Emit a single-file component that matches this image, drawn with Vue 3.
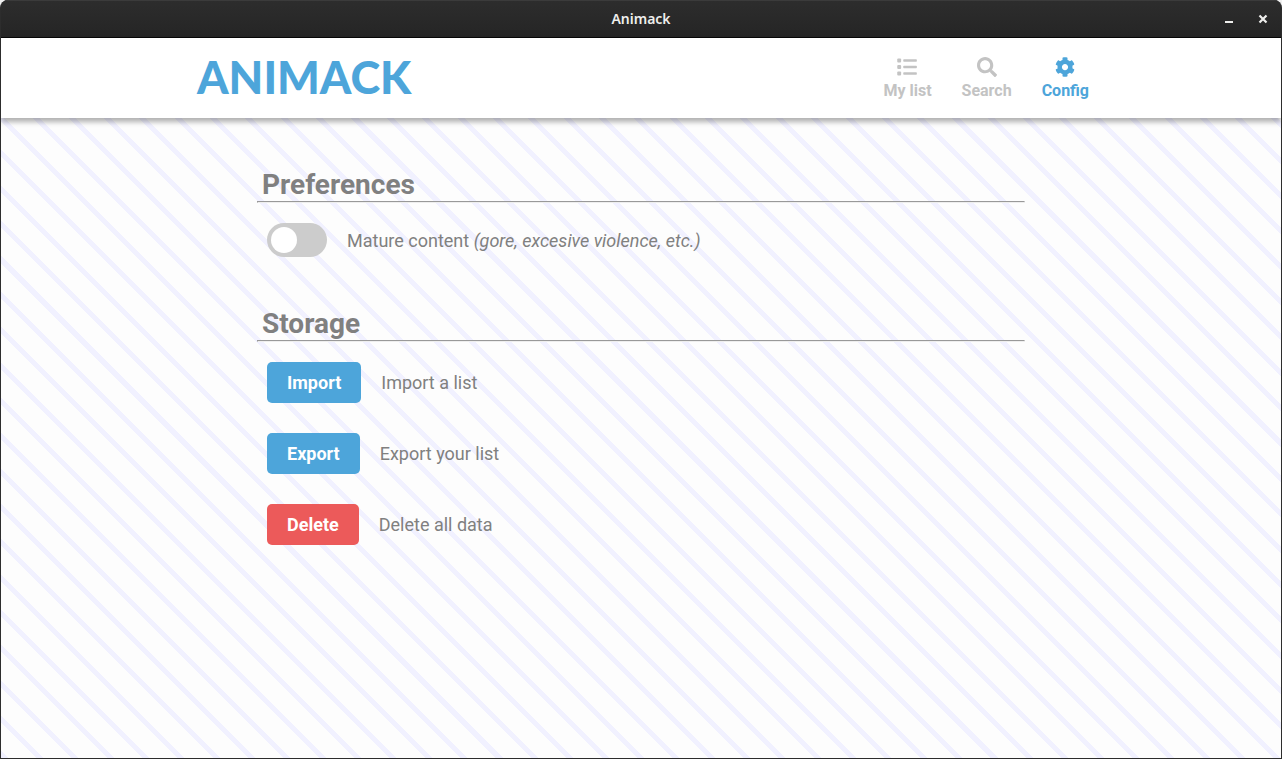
<script setup>
import { ref } from 'vue'

const current = ref('config')
const mature = ref(false)

const tabs = [
  { id: 'list', label: 'My list' },
  { id: 'search', label: 'Search' },
  { id: 'config', label: 'Config' },
]

const actions = [
  { id: 'import', label: 'Import', text: 'Import a list' },
  { id: 'export', label: 'Export', text: 'Export your list' },
  { id: 'delete', label: 'Delete', text: 'Delete all data', danger: true },
]
</script>

<template>
  <div class="window">
    <div class="titlebar">
      <span class="title">Animack</span>
      <div class="controls">
        <button type="button" aria-label="Minimize">
          <svg width="10" height="10" viewBox="0 0 10 10"><path d="M1 8h8" stroke="currentColor" stroke-width="2" /></svg>
        </button>
        <button type="button" aria-label="Close">
          <svg width="10" height="10" viewBox="0 0 10 10"><path d="M1.5 1.5l7 7M8.5 1.5l-7 7" stroke="currentColor" stroke-width="2.2" /></svg>
        </button>
      </div>
    </div>

    <header class="header">
      <div class="bar">
        <a class="logo" href="#">ANIMACK</a>
        <nav class="nav">
          <a
            v-for="tab in tabs"
            :key="tab.id"
            :href="'#' + tab.id"
            :class="{ active: current === tab.id }"
            @click="current = tab.id"
          >
            <svg v-if="tab.id === 'list'" class="icon" viewBox="0 0 512 512" fill="currentColor">
              <rect x="6" y="40" width="100" height="100" rx="26" />
              <rect x="6" y="206" width="100" height="100" rx="26" />
              <rect x="6" y="372" width="100" height="100" rx="26" />
              <rect x="160" y="58" width="348" height="64" rx="18" />
              <rect x="160" y="224" width="348" height="64" rx="18" />
              <rect x="160" y="390" width="348" height="64" rx="18" />
            </svg>
            <svg v-else-if="tab.id === 'search'" class="icon" viewBox="0 0 512 512" fill="currentColor">
              <path d="M505 442.7L405.3 343c-4.5-4.5-10.6-7-17-7H372c27.6-35.3 44-79.7 44-128C416 93.1 322.9 0 208 0S0 93.1 0 208s93.1 208 208 208c48.3 0 92.7-16.4 128-44v16.3c0 6.4 2.5 12.5 7 17l99.7 99.7c9.4 9.4 24.6 9.4 33.9 0l28.3-28.3c9.4-9.4 9.4-24.6.1-34zM208 336c-70.7 0-128-57.2-128-128 0-70.7 57.2-128 128-128 70.7 0 128 57.2 128 128 0 70.7-57.2 128-128 128z" />
            </svg>
            <svg v-else class="icon" viewBox="0 0 512 512" fill="currentColor">
              <path d="M487.4 315.7l-42.6-24.6c4.3-23.2 4.3-47 0-70.2l42.6-24.6c4.9-2.8 7.1-8.6 5.5-14-11.1-35.6-30-67.8-54.7-94.6-3.8-4.1-10-5.1-14.8-2.3L380.8 110c-17.9-15.4-38.5-27.3-60.8-35.1V25.8c0-5.6-3.9-10.5-9.4-11.7-36.7-8.2-74.3-7.8-109.2 0-5.5 1.2-9.4 6.1-9.4 11.7V75c-22.2 7.9-42.8 19.8-60.8 35.1L88.7 85.5c-4.9-2.8-11-1.9-14.8 2.3-24.7 26.7-43.6 58.9-54.7 94.6-1.7 5.4.6 11.2 5.5 14L67.3 221c-4.3 23.2-4.3 47 0 70.2l-42.6 24.6c-4.9 2.8-7.1 8.6-5.5 14 11.1 35.6 30 67.8 54.7 94.6 3.8 4.1 10 5.1 14.8 2.3l42.6-24.6c17.9 15.4 38.5 27.3 60.8 35.1v49.2c0 5.6 3.9 10.5 9.4 11.7 36.7 8.2 74.3 7.8 109.2 0 5.5-1.2 9.4-6.1 9.4-11.7v-49.2c22.2-7.9 42.8-19.8 60.8-35.1l42.6 24.6c4.9 2.8 11 1.9 14.8-2.3 24.7-26.7 43.6-58.9 54.7-94.6 1.5-5.5-.7-11.3-5.6-14.1zM256 336c-44.1 0-80-35.9-80-80s35.9-80 80-80 80 35.9 80 80-35.9 80-80 80z" />
            </svg>
            <span>{{ tab.label }}</span>
          </a>
        </nav>
      </div>
    </header>

    <main class="content">
      <section>
        <h2>Preferences</h2>
        <hr />
        <div class="rows">
          <label class="row">
            <input v-model="mature" class="switch" type="checkbox" />
            <span>Mature content <em>(gore, excesive violence, etc.)</em></span>
          </label>
        </div>
      </section>

      <section>
        <h2>Storage</h2>
        <hr />
        <div class="rows">
          <div v-for="action in actions" :key="action.id" class="row">
            <button
              type="button"
              class="btn"
              :class="{ danger: action.danger }"
              :aria-describedby="action.id + '-text'"
            >{{ action.label }}</button>
            <span :id="action.id + '-text'">{{ action.text }}</span>
          </div>
        </div>
      </section>
    </main>
  </div>
</template>

<style>
body {
  background: #f0f0f0;
}
</style>

<style scoped>
.window {
  box-sizing: border-box;
  min-height: 100vh;
  display: flex;
  flex-direction: column;
  border: 1px solid #2d2d2d;
  border-top: 0;
  border-radius: 8px 8px 0 0;
  overflow: hidden;
  background: #2d2d2d;
  font-family: Roboto, "Liberation Sans", sans-serif;
}

.titlebar {
  box-sizing: border-box;
  height: 38px;
  flex: none;
  display: grid;
  grid-template-columns: 1fr auto 1fr;
  align-items: center;
  padding: 1px 13px 0;
  background: linear-gradient(#2d2d2d, #252525);
  border-bottom: 1px solid #070707;
  box-shadow: inset 0 1px #3b3b3b;
  color: #eeeeec;
}

.title {
  grid-column: 2;
  font: 600 14px/20px "Noto Sans", sans-serif;
}

.controls {
  display: flex;
  justify-content: flex-end;
  gap: 24px;
}

.controls button {
  display: flex;
  padding: 0;
  border: 0;
  background: none;
  color: inherit;
}

.header {
  position: relative;
  flex: none;
  background: #fff;
  box-shadow: 0 4px 5px rgba(0, 0, 0, 0.3);
}

.bar {
  box-sizing: border-box;
  width: 70%;
  height: 80px;
  margin: 0 auto;
  padding-top: 2px;
  display: flex;
  align-items: center;
  justify-content: space-between;
}

.logo {
  padding: 0 0 4px 4px;
  font: 900 45px/48px Lato, sans-serif;
  color: #4da5da;
  text-decoration: none;
}

.nav {
  display: flex;
  gap: 30px;
}

.nav a {
  display: flex;
  flex-direction: column;
  align-items: center;
  gap: 4px;
  font-size: 16px;
  font-weight: 700;
  line-height: 20px;
  color: #c3c3c3;
  text-decoration: none;
}

.nav a.active {
  color: #4da5da;
}

.icon {
  width: 20px;
  height: 20px;
}

.content {
  flex: 1;
  padding: 50px 20%;
  display: flex;
  flex-direction: column;
  gap: 50px;
  background: repeating-linear-gradient(45deg, #f1f1ff 0 5px, #fdfdfd 5px 25px);
  color: #808080;
  font-size: 18px;
  line-height: 21px;
}

h2 {
  margin: 0;
  padding: 0 5px;
  font-size: 28px;
  font-weight: 700;
  line-height: 33px;
}

hr {
  margin: 0;
  border: 1px solid;
  border-color: #999 #eee #eee #999;
}

.rows {
  display: flex;
  flex-direction: column;
  gap: 30px;
  padding: 20px 10px 0;
}

.row {
  display: flex;
  align-items: center;
  gap: 20px;
}

.switch {
  appearance: none;
  box-sizing: border-box;
  width: 60px;
  height: 34px;
  margin: 0;
  padding: 4px;
  display: flex;
  border-radius: 17px;
  background: #ccc;
}

.switch::before {
  content: "";
  width: 26px;
  height: 26px;
  border-radius: 50%;
  background: #fff;
}

.switch:checked {
  justify-content: flex-end;
  background: #4da5da;
}

.btn {
  padding: 10px 20px;
  border: 0;
  border-radius: 5px;
  background: #4da5da;
  color: #fff;
  font: inherit;
  font-weight: 700;
}

.btn.danger {
  background: #ec5a5a;
}
</style>
